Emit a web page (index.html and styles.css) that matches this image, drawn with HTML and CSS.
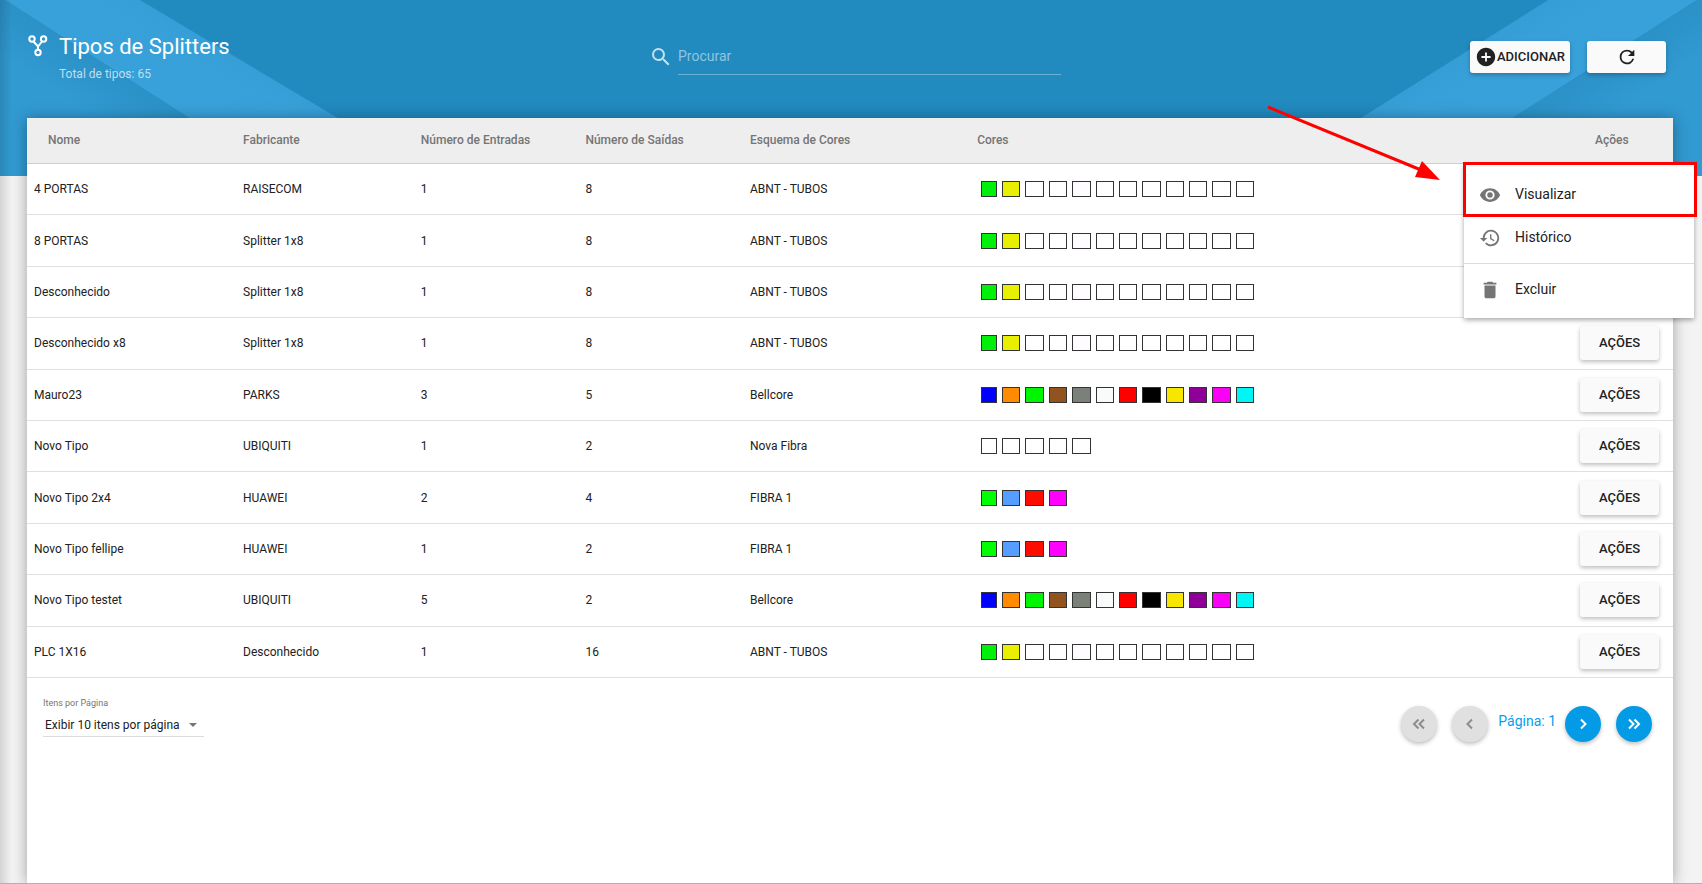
FILE: index.html
```html
<!DOCTYPE html>
<html lang="pt-BR">
<head>
<meta charset="utf-8">
<title>Tipos de Splitters</title>
<link rel="stylesheet" href="styles.css">
</head>
<body>
<div class="page">
<div class="hero">
<svg class="ribbon ribbon-left" width="440" height="176" viewBox="0 0 440 176" aria-hidden="true">
<defs>
<linearGradient id="band" gradientUnits="userSpaceOnUse" x1="97" y1="59" x2="157" y2="-41">
<stop offset="0" stop-color="#39a1d9"/><stop offset=".5" stop-color="#38a0d8"/><stop offset="1" stop-color="#3198cf"/>
</linearGradient>
<linearGradient id="corner" gradientUnits="userSpaceOnUse" x1="97" y1="59" x2="70" y2="101">
<stop offset="0" stop-color="#2b91c7"/><stop offset="1" stop-color="#319ad1"/>
</linearGradient>
</defs>
<path d="M5 0H140L435 176H280Z" fill="url(#band)"/>
<path d="M0 0H5L280 176H0Z" fill="url(#corner)"/>
</svg>
<svg class="ribbon ribbon-right" width="440" height="176" viewBox="0 0 440 176" aria-hidden="true">
<path d="M5 0H154L433 176H280Z" fill="url(#band)"/>
<path d="M0 0H5L280 176H0Z" fill="url(#corner)"/>
</svg>
<header class="toolbar">
<div class="heading">
<svg class="heading-icon" width="20" height="22" viewBox="0 0 20 22" fill="none" stroke="#fff" stroke-width="2" aria-hidden="true"><circle cx="4" cy="4" r="2.7"/><circle cx="15.600" cy="4" r="2.700"/><circle cx="10" cy="17.500" r="2.700"/><path d="M5.500 6.500L10 11.500L14 6.500M10 11.500V15"/></svg>
<div>
<h1 class="title">Tipos de Splitters</h1>
<p class="subtitle">Total de tipos: 65</p>
</div>
</div>
<div class="search">
<svg width="24" height="24" viewBox="0 0 24 24" fill="#c5e0ef" aria-hidden="true"><path d="M15.500 14h-.790l-.280-.270A6.470 6.470 0 0 0 16 9.500 6.500 6.500 0 1 0 9.500 16c1.610 0 3.090-.590 4.230-1.570l.270.280v.790l5 4.990L20.490 19l-4.990-5zm-6 0a4.500 4.500 0 1 1 0-9 4.500 4.500 0 0 1 0 9z"/></svg>
<input class="search-input" type="text" placeholder="Procurar" aria-label="Procurar">
</div>
<div class="tools">
<button class="btn btn-add" type="button"><svg width="22" height="22" viewBox="0 0 24 24" fill="#212121" aria-hidden="true"><path d="M12 2C6.480 2 2 6.480 2 12s4.480 10 10 10 10-4.480 10-10S17.520 2 12 2zm5 11h-4v4h-2v-4H7v-2h4V7h2v4h4v2z"/></svg>ADICIONAR</button>
<button class="btn btn-refresh" type="button" aria-label="Atualizar"><svg width="22" height="22" viewBox="0 0 24 24" fill="#212121" aria-hidden="true"><path d="M17.650 6.350A7.960 7.960 0 0 0 12 4a8 8 0 1 0 7.730 10h-2.080A6 6 0 1 1 12 6c1.660 0 3.140.690 4.220 1.780L13 11h7V4l-2.350 2.350z"/></svg></button>
</div>
</header>
</div>

<main class="card">
<table class="grid">
<colgroup><col class="c-name"><col class="c-maker"><col class="c-in"><col class="c-out"><col class="c-scheme"><col><col class="c-act"></colgroup>
<thead><tr><th class="first">Nome</th><th>Fabricante</th><th>Número de Entradas</th><th>Número de Saídas</th><th>Esquema de Cores</th><th>Cores</th><th class="last">Ações</th></tr></thead>
<tbody id="rows"></tbody>
</table>
<footer class="pager">
<div class="page-size">
<label for="size">Itens por Página</label>
<div class="select-wrap">
<select id="size"><option>Exibir 10 itens por página</option></select>
<svg width="8" height="4" viewBox="0 0 8 4" fill="#757575" aria-hidden="true"><path d="M0 0H8L4 4Z"/></svg>
</div>
</div>
<nav class="pages" aria-label="Paginação">
<button class="round" type="button" disabled aria-label="Primeira página"><svg width="20" height="20" viewBox="0 0 20 20"><path d="M9.500 5.500L5 10l4.500 4.500M15 5.500L10.500 10l4.500 4.500"/></svg></button>
<button class="round" type="button" disabled aria-label="Página anterior"><svg width="20" height="20" viewBox="0 0 20 20"><path d="M12 5.500L7.500 10l4.500 4.500"/></svg></button>
<span class="current">Página: 1</span>
<button class="round" type="button" aria-label="Próxima página"><svg width="20" height="20" viewBox="0 0 20 20"><path d="M8 5.500L12.500 10L8 14.500"/></svg></button>
<button class="round" type="button" aria-label="Última página"><svg width="20" height="20" viewBox="0 0 20 20"><path d="M5 5.500L9.500 10L5 14.500M10.500 5.500L15 10l-4.500 4.500"/></svg></button>
</nav>
</footer>
</main>

<div class="menu" role="menu">
<button class="item" type="button" role="menuitem"><svg width="22" height="22" viewBox="0 0 24 24"><path d="M12 4.500C7 4.500 2.730 7.610 1 12c1.730 4.390 6 7.500 11 7.500s9.270-3.110 11-7.500c-1.730-4.390-6-7.500-11-7.500zM12 17a5 5 0 1 1 0-10 5 5 0 0 1 0 10zm0-8a3 3 0 1 0 0 6 3 3 0 0 0 0-6z"/></svg>Visualizar</button>
<button class="item" type="button" role="menuitem"><svg width="22" height="22" viewBox="0 0 24 24"><path d="M13 3a9 9 0 0 0-9 9H1l3.890 3.890.070.140L9 12H6a7 7 0 1 1 2.060 4.940l-1.420 1.420A9 9 0 1 0 13 3zm-1 5v5l4.280 2.540.720-1.210-3.500-2.080V8H12z"/></svg>Histórico</button>
<hr class="rule">
<button class="item" type="button" role="menuitem"><svg width="22" height="22" viewBox="0 0 24 24"><path d="M6 19c0 1.100.9 2 2 2h8c1.100 0 2-.9 2-2V7H6v12zM19 4h-3.500l-1-1h-5l-1 1H5v2h14V4z"/></svg>Excluir</button>
<div class="highlight"></div>
<svg class="arrow" width="176" height="78" viewBox="0 0 176 78" aria-hidden="true"><path d="M1 2L154 65" stroke="#f00" stroke-width="3"/><path d="M173 75L148 72L155 56Z" fill="#f00"/></svg>
</div>
</div>
<script src="app.js"></script>
</body>
</html>
```
FILE: app.js
```js
const palettes = {
  abnt: ['#00f00a', '#e8f000', '#fff', '#fff', '#fffcff', '#fff', '#fff', '#fff', '#fff', '#fff', '#fff', '#fff'],
  bell: ['#00f', '#ff8c00', '#00f500', '#91541e', '#7b8079', '#f9fbfa', '#f00', '#000', '#f7e600', '#8f0099', '#fa00f5', '#00f5f5'],
  nova: ['#fff', '#fff', '#fff', '#fff', '#fff'],
  fibra: ['#0f0', '#559dff', '#fc0d00', '#f0f']
};
const data = [
  ['4 PORTAS', 'RAISECOM', 1, 8, 'ABNT - TUBOS', 'abnt'],
  ['8 PORTAS', 'Splitter 1x8', 1, 8, 'ABNT - TUBOS', 'abnt'],
  ['Desconhecido', 'Splitter 1x8', 1, 8, 'ABNT - TUBOS', 'abnt'],
  ['Desconhecido x8', 'Splitter 1x8', 1, 8, 'ABNT - TUBOS', 'abnt'],
  ['Mauro23', 'PARKS', 3, 5, 'Bellcore', 'bell'],
  ['Novo Tipo', 'UBIQUITI', 1, 2, 'Nova Fibra', 'nova'],
  ['Novo Tipo 2x4', 'HUAWEI', 2, 4, 'FIBRA 1', 'fibra'],
  ['Novo Tipo fellipe', 'HUAWEI', 1, 2, 'FIBRA 1', 'fibra'],
  ['Novo Tipo testet', 'UBIQUITI', 5, 2, 'Bellcore', 'bell'],
  ['PLC 1X16', 'Desconhecido', 1, 16, 'ABNT - TUBOS', 'abnt']
];
document.getElementById('rows').innerHTML = data.map(row => {
  const cells = row.slice(0, 5).map(v => `<td>${v}</td>`).join('');
  const chips = palettes[row[5]].map(c => `<span class="chip" style="background:${c}"></span>`).join('');
  return `<tr>${cells}<td><div class="chips">${chips}</div></td><td class="last"><button class="btn btn-row" type="button">AÇÕES</button></td></tr>`;
}).join('');
```
FILE: styles.css
```css
* { box-sizing: border-box; }
body { margin: 0; background: #f3f3f3; color: #212121; font-family: Roboto, "Noto Sans", sans-serif; font-size: 12px; }
button, input, select { font: inherit; color: inherit; }
.page { position: relative; display: flex; flex-direction: column; min-height: 100vh; border-bottom: 1px solid #abb2bb; overflow: hidden; }
.page::before { content: ""; position: absolute; z-index: 1; top: 0; bottom: 0; left: 0; width: 12px; background: linear-gradient(90deg, rgba(0,0,0,.13), rgba(0,0,0,0)); }
.hero { position: relative; height: 176px; background: #218abf; overflow: hidden; }
.ribbon { position: absolute; top: 0; }
.ribbon-left { left: 0; }
.ribbon-right { right: 0; transform: scaleX(-1); }
.toolbar { position: relative; display: grid; grid-template-columns: 1fr 412px 1fr; padding: 28px 36px 0 28px; }
.heading { display: flex; gap: 11px; }
.heading-icon { margin-top: 7px; }
.title { margin: 0; color: #fff; font-size: 22px; font-weight: 400; line-height: 38px; }
.subtitle { margin: 0; color: #bddff2; font-size: 12px; line-height: 16px; }
.search { display: flex; align-items: center; gap: 5px; height: 47px; margin: 0 -8px 0 8px; padding-top: 10px; }
.search svg { flex: none; }
.search-input { flex: 1; min-width: 0; height: 37px; padding: 0 0 1px; border: 0; border-bottom: 1px solid #6bb0d5; background: none; font-size: 14px; outline: 0; }
.search-input::placeholder { color: #90c5e0; opacity: 1; }
.tools { display: flex; justify-content: flex-end; gap: 17px; padding-top: 13px; }
.btn { display: inline-flex; align-items: center; justify-content: center; padding: 0 0 1px; border: 0; border-radius: 3px; background: #fafafa; color: #212121; font-size: 13px; font-weight: 500; box-shadow: 0 2px 4px rgba(0,0,0,.26); white-space: nowrap; }
.btn-add { width: 100px; height: 32px; }
.btn-refresh { width: 79px; height: 32px; }
.card { position: relative; flex: 1; margin: -58px 29px 0 27px; background: #fff; box-shadow: 0 1px 14px rgba(0,0,0,.35); }
.grid { width: 100%; height: 560px; table-layout: fixed; border-collapse: separate; border-spacing: 0; }
.c-name { width: 12.7%; }
.c-maker { width: 10.8%; }
.c-in, .c-out { width: 10%; }
.c-scheme { width: 13.8%; }
.c-act { width: 100px; }
.grid th { height: 46px; padding: 0 7px 2px; background: #eee; border-bottom: 1px solid #cfcfcf; color: #757575; font-weight: 500; text-align: left; white-space: nowrap; }
.grid th.first { padding-left: 21px; }
.grid th.last { padding-left: 22px; }
.grid td { padding: 0 7px; border-bottom: 1px solid #e0e0e0; }
.grid td.last { padding-right: 14px; text-align: right; }
.chips { display: grid; grid-template-columns: 16px repeat(11, 1fr); gap: 5px; width: 273px; margin-left: 4px; }
.chip { height: 16px; border: 1px solid #333; }
.btn-row { width: 79px; height: 34px; vertical-align: middle; }
.pager { display: flex; justify-content: space-between; padding: 18px 21px 0 16px; }
.page-size label { display: block; color: #757575; font-size: 9px; line-height: 14px; }
.select-wrap { display: flex; align-items: center; width: 161px; height: 27px; padding: 3px 7px 0 2px; border-bottom: 1px solid #dcdcdc; }
.select-wrap select { flex: 1; min-width: 0; padding: 0; border: 0; background: none; appearance: none; }
.pages { display: flex; align-items: center; height: 56px; }
.round { display: grid; place-items: center; width: 36px; height: 36px; padding: 0; border: 0; border-radius: 50%; background: #039be5; box-shadow: 0 2px 4px rgba(0,0,0,.26); }
.round + .round { margin-left: 15px; }
.round svg { fill: none; stroke: #fff; stroke-width: 2; }
.round:disabled { background: #e0e0e0; }
.round:disabled svg { stroke: #8c8c8c; }
.current { margin: 0 9px 6px 10px; color: #03a0f0; font-size: 14px; }
.menu { position: absolute; z-index: 2; top: 164px; right: 8px; width: 230px; padding: 9px 0 7px; background: #fff; box-shadow: 0 2px 5px rgba(0,0,0,.35); }
.item { display: flex; align-items: center; gap: 14px; width: 100%; height: 43px; padding: 0 15px 2px; border: 0; background: none; font-size: 14px; text-align: left; }
.item svg { margin-top: 3px; fill: #757575; }
.rule { height: 1px; margin: 4px 0; border: 0; background: #dcdcdc; }
.highlight { position: absolute; top: -2px; left: -1px; right: -3px; height: 55px; border: 3px solid #f00; }
.arrow { position: absolute; top: -59px; left: -197px; }
```
